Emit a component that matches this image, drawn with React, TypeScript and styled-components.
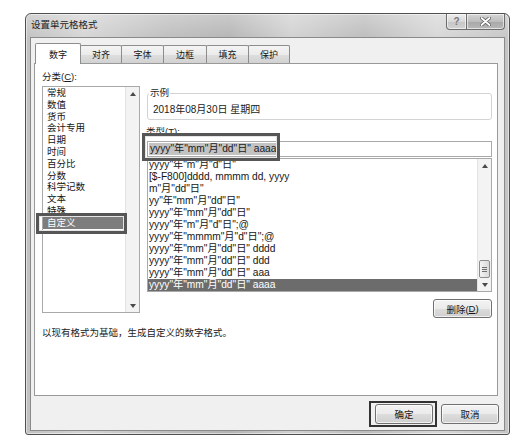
import React from 'react';
import styled, { createGlobalStyle } from 'styled-components';

const FONT = `"Liberation Sans", "Noto Sans CJK SC", sans-serif`;

const CATEGORIES = [
  '常规',
  '数值',
  '货币',
  '会计专用',
  '日期',
  '时间',
  '百分比',
  '分数',
  '科学记数',
  '文本',
  '特殊',
  '自定义',
];

const FORMATS = [
  'yyyy"年"m"月"d"日"',
  '[$-F800]dddd, mmmm dd, yyyy',
  'm"月"dd"日"',
  'yy"年"mm"月"dd"日"',
  'yyyy"年"mm"月"dd"日"',
  'yyyy"年"m"月"d"日";@',
  'yyyy"年"mmmm"月"d"日";@',
  'yyyy"年"mm"月"dd"日" dddd',
  'yyyy"年"mm"月"dd"日" ddd',
  'yyyy"年"mm"月"dd"日" aaa',
  'yyyy"年"mm"月"dd"日" aaaa',
];

const TABS = [
  { label: '数字', width: 46 },
  { label: '对齐', width: 42 },
  { label: '字体', width: 43 },
  { label: '边框', width: 44 },
  { label: '填充', width: 43 },
  { label: '保护', width: 42 },
];

const Arrow = ({ up }: { up?: boolean }) => (
  <svg width="6" height="4" viewBox="0 0 6 4">
    <path d={up ? 'M0 4 L3 0 L6 4 Z' : 'M0 0 L6 0 L3 4 Z'} fill="#4a4a4a" />
  </svg>
);

const Scroll = ({ thumb }: { thumb?: boolean }) => (
  <ScrollBar>
    <ScrollArrow>
      <Arrow up />
    </ScrollArrow>
    <Track>
      {thumb && (
        <Thumb>
          <Grip />
          <Grip />
          <Grip />
        </Thumb>
      )}
    </Track>
    <ScrollArrow>
      <Arrow />
    </ScrollArrow>
  </ScrollBar>
);

export default function App() {
  return (
    <>
      <GlobalStyle />
      <Stage>
        <Window>
          <TitleBar>
            <Title>设置单元格格式</Title>
            <Captions>
              <CaptionButton $w={21}>?</CaptionButton>
              <CaptionButton $w={38} $close>
                <svg width="11" height="9" viewBox="0 0 11 9">
                  <path d="M1.5 1 L9.5 8 M9.5 1 L1.5 8" stroke="#5a5a5a" strokeWidth="3.4" strokeLinecap="round" />
                  <path d="M1.5 1 L9.5 8 M9.5 1 L1.5 8" stroke="#ffffff" strokeWidth="1.8" strokeLinecap="round" />
                </svg>
              </CaptionButton>
            </Captions>
          </TitleBar>

          <Frame>
            <TabRow>
              {TABS.map((t, i) => (
                <Tab key={t.label} $w={t.width} $active={i === 0}>
                  {t.label}
                </Tab>
              ))}
            </TabRow>

            <Panel>
              <Columns>
                <div>
                  <FieldLabel>
                    分类(<u>C</u>):
                  </FieldLabel>
                  <Marked>
                    <ListBox $h={227}>
                      <Items>
                        {CATEGORIES.map((c) => (
                          <CategoryItem key={c} $selected={c === '自定义'}>
                            {c}
                          </CategoryItem>
                        ))}
                      </Items>
                      <Scroll />
                    </ListBox>
                    <Annotation style={{ left: -6, top: 127, width: 91, height: 21 }} />
                  </Marked>
                </div>

                <RightCol>
                  <Sample>
                    <legend>示例</legend>
                    <SampleText>2018年08月30日 星期四</SampleText>
                  </Sample>
                  <TypeLabel>
                    类型(<u>T</u>):
                  </TypeLabel>
                  <Marked>
                    <TypeInput>
                      <Selected>yyyy"年"mm"月"dd"日" aaaa</Selected>
                    </TypeInput>
                    <Annotation style={{ left: -5, top: -6, width: 138, height: 28 }} />
                  </Marked>
                  <ListBox $h={134} $mt={1}>
                    <Items>
                      {FORMATS.map((f, i) => (
                        <FormatItem key={f} $selected={i === FORMATS.length - 1}>
                          {f}
                        </FormatItem>
                      ))}
                    </Items>
                    <Scroll thumb />
                  </ListBox>
                  <DeleteRow>
                    <Button $w={59} $h={19}>
                      删除(<u>D</u>)
                    </Button>
                  </DeleteRow>
                </RightCol>
              </Columns>
              <Hint>以现有格式为基础，生成自定义的数字格式。</Hint>
            </Panel>

            <Footer>
              <Focused>
                <Button $w={58} $h={20}>确定</Button>
              </Focused>
              <Button $w={58} $h={20}>取消</Button>
            </Footer>
          </Frame>
        </Window>
      </Stage>
    </>
  );
}

const GlobalStyle = createGlobalStyle`
  html, body {
    margin: 0;
    padding: 0;
    background: #ffffff;
  }
  body {
    font-family: ${FONT};
    font-size: 10px;
    color: #1b1b1b;
  }
  u {
    text-decoration-thickness: 1px;
    text-underline-offset: 1px;
  }
`;

const Stage = styled.div`
  width: 518px;
  height: 442px;
  box-sizing: border-box;
  padding: 13px 0 0 25px;
`;

const Window = styled.section`
  width: 485px;
  height: 422px;
  box-sizing: border-box;
  display: flex;
  flex-direction: column;
  border: 1px solid #505050;
  border-radius: 6px 6px 3px 3px;
  background:
    linear-gradient(180deg, rgba(255, 255, 255, 0.3), rgba(255, 255, 255, 0) 28px),
    linear-gradient(
      90deg,
      #c0c0c0 0%,
      #d4d4d4 12%,
      #bcbcbc 30%,
      #b3b3b3 42%,
      #d0d0d0 55%,
      #bbbbbb 70%,
      #d6d6d6 85%,
      #c4c4c4 100%
    );
  box-shadow: inset 0 0 0 1px rgba(255, 255, 255, 0.5);
`;

const TitleBar = styled.header`
  height: 23px;
  display: flex;
  align-items: flex-start;
  padding-left: 5px;
`;

const Title = styled.span`
  font-size: 9.5px;
  line-height: 22px;
  color: #1e1e1e;
`;

const Captions = styled.div`
  margin-left: auto;
  margin-right: 4px;
  display: flex;
`;

const CaptionButton = styled.div<{ $w: number; $close?: boolean }>`
  width: ${(p) => p.$w}px;
  height: 16px;
  box-sizing: border-box;
  display: flex;
  align-items: center;
  justify-content: center;
  border: 1px solid #6c6c6c;
  border-top: none;
  border-left-width: ${(p) => (p.$close ? 0 : 1)}px;
  border-radius: ${(p) => (p.$close ? '0 0 4px 0' : '0 0 0 4px')};
  background: ${(p) =>
    p.$close
      ? 'linear-gradient(180deg, #d6d6d6 0%, #bdbdbd 50%, #a8a8a8 51%, #b8b8b8 100%)'
      : 'linear-gradient(180deg, #eeeeee 0%, #d8d8d8 50%, #c6c6c6 51%, #d2d2d2 100%)'};
  box-shadow: inset 0 0 0 1px rgba(255, 255, 255, 0.6);
  font-size: 10px;
  font-weight: bold;
  color: #7a7a7a;
`;

const Frame = styled.div`
  flex: 1;
  margin: 0 4px 3px 4px;
  border: 1px solid #8a8a8a;
  background: #f0f0f0;
  display: flex;
  flex-direction: column;
  padding: 5px 6px 0 3px;
`;

const TabRow = styled.nav`
  height: 21px;
  display: flex;
  align-items: flex-end;
  padding-left: 1px;
  margin-bottom: -1px;
  position: relative;
  z-index: 1;
`;

const Tab = styled.div<{ $w: number; $active?: boolean }>`
  width: ${(p) => p.$w}px;
  height: ${(p) => (p.$active ? 21 : 18)}px;
  margin-bottom: ${(p) => (p.$active ? 0 : 1)}px;
  margin-right: -1px;
  box-sizing: border-box;
  display: flex;
  align-items: center;
  justify-content: center;
  border: 1px solid #8d8d8d;
  border-bottom: none;
  border-radius: 2px 2px 0 0;
  background: ${(p) =>
    p.$active
      ? '#ffffff'
      : 'linear-gradient(180deg, #f4f4f4 0%, #ebebeb 50%, #dedede 51%, #d2d2d2 100%)'};
  position: relative;
  z-index: ${(p) => (p.$active ? 2 : 1)};
  font-size: 9px;
  color: #151515;
`;

const Panel = styled.div`
  height: 333px;
  box-sizing: border-box;
  border: 1px solid #999999;
  background: #ffffff;
  display: flex;
  flex-direction: column;
  padding: 6px 5px 0 7px;
`;

const Columns = styled.div`
  display: grid;
  grid-template-columns: 98px 345px;
  column-gap: 7px;
`;

const FieldLabel = styled.div`
  font-size: 9.5px;
  line-height: 14px;
  margin-bottom: 2px;
`;

const Marked = styled.div`
  position: relative;
`;

const Annotation = styled.div`
  position: absolute;
  box-sizing: border-box;
  border: 3px solid #565656;
  box-shadow: inset 0 0 0 1px #e4e4e4;
  pointer-events: none;
`;

const ListBox = styled.div<{ $h: number; $mt?: number }>`
  height: ${(p) => p.$h}px;
  margin-top: ${(p) => p.$mt || 0}px;
  box-sizing: border-box;
  border: 1px solid #a9a9a9;
  background: #ffffff;
  display: flex;
  overflow: hidden;
`;

const Items = styled.div`
  flex: 1;
  min-width: 0;
  display: flex;
  flex-direction: column;
`;

const CategoryItem = styled.div<{ $selected?: boolean }>`
  height: 11.8px;
  line-height: 11.8px;
  padding-left: 4px;
  font-size: 9.5px;
  white-space: nowrap;
  background: ${(p) => (p.$selected ? '#7d7d7d' : 'transparent')};
  color: ${(p) => (p.$selected ? '#ffffff' : '#161616')};
`;

const FormatItem = styled.div<{ $selected?: boolean }>`
  height: 12px;
  line-height: 12px;
  padding-left: 1px;
  font-size: 10.2px;
  white-space: nowrap;
  background: ${(p) => (p.$selected ? '#6c6c6c' : 'transparent')};
  color: ${(p) => (p.$selected ? '#ffffff' : '#161616')};
`;

const ScrollBar = styled.div`
  width: 13px;
  display: flex;
  flex-direction: column;
  border-left: 1px solid #e3e3e3;
  background: #f3f3f3;
`;

const ScrollArrow = styled.div`
  height: 13px;
  display: flex;
  align-items: center;
  justify-content: center;
`;

const Track = styled.div`
  flex: 1;
  display: flex;
  flex-direction: column;
  justify-content: flex-end;
  align-items: center;
`;

const Thumb = styled.div`
  width: 11px;
  height: 18px;
  box-sizing: border-box;
  border: 1px solid #8c8c8c;
  border-radius: 2px;
  background: linear-gradient(90deg, #f4f4f4, #dadada);
  display: flex;
  flex-direction: column;
  align-items: center;
  justify-content: center;
  gap: 1px;
`;

const Grip = styled.span`
  width: 5px;
  height: 1px;
  background: #6e6e6e;
`;

const RightCol = styled.div`
  display: flex;
  flex-direction: column;
`;

const Sample = styled.fieldset`
  margin: 17px 0 0;
  padding: 4px 6px 2px 5px;
  border: 1px solid #d3d3d3;
  border-radius: 3px;

  legend {
    padding: 0 1px;
    margin-left: -4px;
    font-size: 9.5px;
    line-height: 12px;
    color: #1e1e1e;
  }
`;

const SampleText = styled.div`
  font-size: 10px;
  line-height: 14px;
`;

const TypeLabel = styled.div`
  margin-top: 5px;
  font-size: 9.5px;
  line-height: 14px;
  margin-left: -1px;
`;

const TypeInput = styled.div`
  margin-top: 2px;
  height: 16px;
  box-sizing: border-box;
  border: 1px solid #a9a9a9;
  background: #ffffff;
  display: flex;
  align-items: center;
  padding-left: 1px;
  font-size: 10.2px;
  white-space: nowrap;
`;

const Selected = styled.span`
  background: #c3c3c3;
  line-height: 12px;
  padding: 0 1px;
`;

const DeleteRow = styled.div`
  display: flex;
  justify-content: flex-end;
  margin-top: 7px;
`;

const Button = styled.div<{ $w: number; $h: number }>`
  width: ${(p) => p.$w}px;
  height: ${(p) => p.$h}px;
  box-sizing: border-box;
  display: flex;
  align-items: center;
  justify-content: center;
  border: 1px solid #707070;
  border-radius: 3px;
  background: linear-gradient(180deg, #f3f3f3 0%, #ebebeb 50%, #dddddd 51%, #cfcfcf 100%);
  box-shadow: inset 0 0 0 1px rgba(255, 255, 255, 0.7);
  font-size: 9.5px;
  color: #151515;
`;

const Hint = styled.div`
  margin-top: 8px;
  font-size: 9.5px;
  line-height: 14px;
`;

const Footer = styled.footer`
  display: flex;
  justify-content: flex-end;
  align-items: center;
  gap: 4px;
  margin-top: 5px;
  margin-right: -1px;
`;

const Focused = styled.div`
  border: 2px solid #333333;
  padding: 1px 2px 1px 4px;
`;
